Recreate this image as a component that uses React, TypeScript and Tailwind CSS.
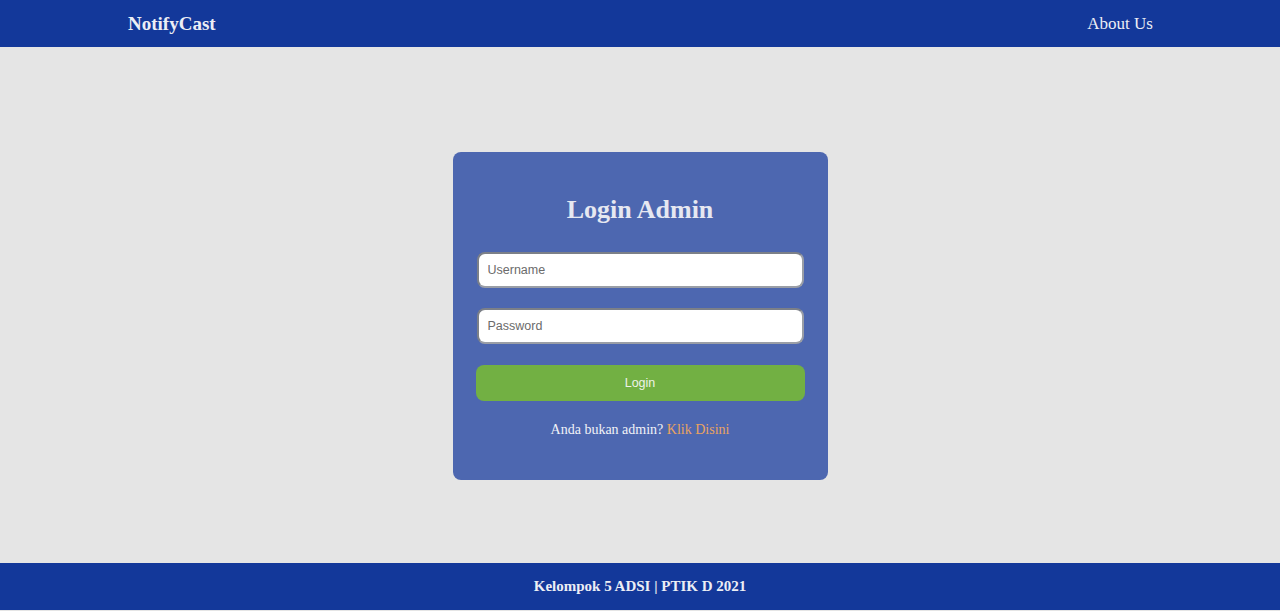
import React from 'react';

const serif = { fontFamily: '"Liberation Serif", "Times New Roman", serif' };
const sans = { fontFamily: '"Liberation Sans", Arial, sans-serif' };

const App = () => {
  return (
    <div className="min-h-[611px] flex flex-col bg-[#e5e5e5]" style={serif}>
      {/* Navbar */}
      <nav className="h-[47px] bg-[#13389a] shrink-0">
        <div className="w-[1024px] mx-auto h-full flex items-center justify-between">
          <span className="text-[19px] font-bold text-[#eceef5] pt-px">NotifyCast</span>
          <a className="text-[17px] text-[#eceef5] -mr-px">About Us</a>
        </div>
      </nav>

      {/* Main */}
      <main className="h-[516px] flex justify-center pt-[105px]">
        <div className="w-[375px] h-[328px] bg-[#4d67b0] rounded-lg px-6 pt-[43px]">
          <h1 className="text-[26px] leading-[30px] font-bold text-center text-[#e6e8f1]">Login Admin</h1>

          <div className="mt-[27px] flex flex-col gap-5">
            <input
              type="text"
              placeholder="Username"
              className="w-full h-[36px] bg-white rounded-lg border-2 border-[#7c8088] border-b-[#9a9ea6] border-r-[#9a9ea6] px-[9px] text-[12.5px] placeholder:text-[#6b6b6b] outline-none"
              style={sans}
            />
            <input
              type="password"
              placeholder="Password"
              className="w-full h-[36px] bg-white rounded-lg border-2 border-[#7c8088] border-b-[#9a9ea6] border-r-[#9a9ea6] px-[9px] text-[12.5px] placeholder:text-[#6b6b6b] outline-none"
              style={sans}
            />
          </div>

          <button
            className="mt-[21px] -mx-px w-[329px] h-[36px] rounded-lg bg-[#72b043] text-[#eef3e8] text-[12.5px]"
            style={sans}
          >
            Login
          </button>

          <p className="mt-[18px] text-center text-[14px] text-[#f1f2f7]">
            Anda bukan admin? <a className="text-[#e9a35f]">Klik Disini</a>
          </p>
        </div>
      </main>

      {/* Footer */}
      <footer className="h-[47px] bg-[#13389a] flex items-center justify-center shrink-0">
        <span className="text-[15px] font-bold text-[#eceef5]">Kelompok 5 ADSI | PTIK D 2021</span>
      </footer>
    </div>
  );
};

export default App;
